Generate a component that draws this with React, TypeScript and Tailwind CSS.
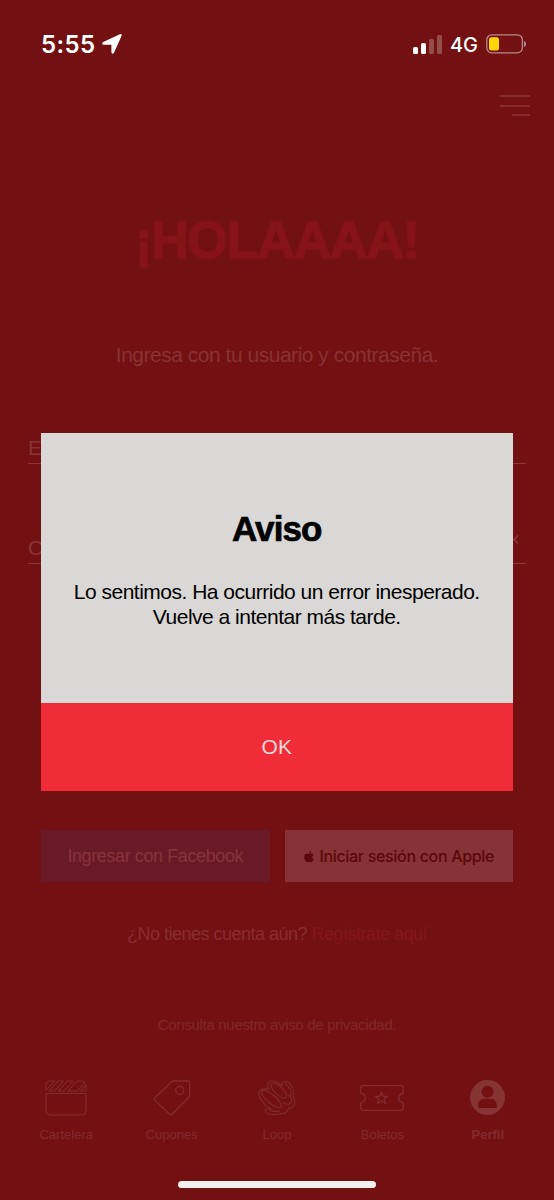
import type { ReactNode } from 'react';
import { FaApple } from 'react-icons/fa';
import clsx from 'clsx';

interface Tab {
  label: string;
  icon: ReactNode;
  active?: boolean;
}

function ClapperIcon() {
  return (
    <svg width="42" height="36" viewBox="0 0 42 36" fill="none" stroke="currentColor" strokeWidth="1.1" strokeLinejoin="round">
      <path d="M1 10.500V5.500Q1 1 5.500 1H9.500L1 10.500zM4 11 13 1h5.500l-9 10zM13.500 11l9-10H28l-9 10zM23 11l9-10h4.500q2.200 0 3.300 1.800L32.500 11h-4zM35.500 11 41 5v6z" />
      <path d="M1 13.500h40V30q0 5-5 5H6q-5 0-5-5z" />
    </svg>
  );
}

function TagIcon() {
  return (
    <svg width="38" height="36" viewBox="0 0 38 36" fill="none" stroke="currentColor" strokeWidth="1.4" strokeLinejoin="round">
      <path d="M19.500 1H35.500q1.200 0 1.200 1.200V16.500L19 34.300q-1.200 1.200-2.400 0L1.800 20.300q-1.200-1.200 0-2.400z" />
      <circle cx="26.800" cy="10.500" r="4" />
    </svg>
  );
}

function LoopIcon() {
  return (
    <svg width="38" height="36" viewBox="0 0 38 36" fill="none" stroke="currentColor" strokeWidth="1.1" strokeLinejoin="round" strokeLinecap="round">
      <path d="M11 9.200C7.500 3.500 11 .2 16 1.400c3.300.8 6 2.400 8.500 4.300C23 1.800 27.500-.3 31 3.200c4 4 5.500 9.500 4 13.500 2 3 2 7 .5 9.300-1.100 1.600-3 2.200-5 2-1.200 4.500-4.500 6.300-8.200 5.500-3 1.600-9.500 1.200-13 0-3.300-1.300-2.800-5 .7-4.800l3 .3C6 25.500 1 18.500.8 13.800.7 9.300 5.500 7.700 11 9.200z" />
      <ellipse cx="13.500" cy="19" rx="12.500" ry="4.300" transform="rotate(41 13.500 19)" />
      <ellipse cx="20.800" cy="10.600" rx="10" ry="4" transform="rotate(42 20.800 10.600)" />
      <path d="M27 3.800c4 2.200 6.800 7 6 11.400-.4 1.300-1.800 1.300-2.500.3" />
      <path d="M12 30.500c4 1 7.500 1 10 .5M25 22.500c3.500 2.700 8 2.300 8.500-1.500.2-1.500-.3-2.600-1.200-3.600" />
    </svg>
  );
}

function TicketIcon() {
  return (
    <svg width="44" height="26" viewBox="0 0 44 26" fill="none" stroke="currentColor" strokeWidth="1.3" strokeLinejoin="round">
      <path d="M3 .7h38q2.300 0 2.300 2.300v5c-3 .8-4.500 2.600-4.500 5s1.500 4.200 4.500 5v5q0 2.300-2.300 2.300H3Q.7 25.300.7 23v-5c3-.8 4.500-2.600 4.500-5S3.700 8.800.7 8V3Q.7.7 3 .7z" />
      <path d="m21.500 7.200 1.600 4.100 4.400.2-3.400 2.800 1.200 4.200-3.800-2.400-3.800 2.400 1.200-4.200-3.400-2.800 4.400-.2z" />
    </svg>
  );
}

function ProfileIcon() {
  return (
    <svg width="35" height="35" viewBox="0 0 35 35">
      <circle cx="17.500" cy="17.500" r="17.500" fill="currentColor" />
      <circle cx="17.500" cy="11.800" r="6" fill="#721012" />
      <path d="M8.200 27v-1.500c0-4 2.600-6.800 6.300-6.800h6c3.700 0 6.300 2.800 6.300 6.800V27q0 1-1 1H9.200q-1 0-1-1z" fill="#721012" />
    </svg>
  );
}

const tabs: Tab[] = [
  { label: 'Cartelera', icon: <ClapperIcon /> },
  { label: 'Cupones', icon: <TagIcon /> },
  { label: 'Loop', icon: <LoopIcon /> },
  { label: 'Boletos', icon: <TicketIcon /> },
  { label: 'Perfil', icon: <ProfileIcon />, active: true },
];

function StatusBar() {
  return (
    <div className="flex h-[88px] items-center justify-between pl-[41px] pr-[28px] font-['Inter',sans-serif] text-white">
      <div className="flex items-center gap-[6px]">
        <span className="pt-[2px] text-[24px] leading-none font-semibold tracking-[0.4px]">5:55</span>
        <svg width="20" height="20" viewBox="0 0 20 20" fill="currentColor">
          <path d="M1.200 8 17.800.3c1.300-.6 2.300.4 1.700 1.700L12 18.800c-.6 1.400-2.600 1-2.600-.6v-7.500H1.700C0 10.700-.3 8.700 1.200 8z" />
        </svg>
      </div>
      <div className="flex items-center">
        <div className="flex h-[19px] items-end gap-[2.500px]">
          <span className="h-[7px] w-[5.500px] rounded-[1.500px] bg-white" />
          <span className="h-[11px] w-[5.500px] rounded-[1.500px] bg-white" />
          <span className="h-[15px] w-[5.500px] rounded-[1.500px] bg-white/25" />
          <span className="h-[19px] w-[5.500px] rounded-[1.500px] bg-white/25" />
        </div>
        <span className="ml-[8px] w-[36px] pt-[2px] text-[20px] leading-none font-medium tracking-[-0.2px]">4G</span>
        <svg width="40" height="20" viewBox="0 0 40 20" fill="none">
          <rect x=".8" y=".8" width="35.600" height="18" rx="5" stroke="#fff" strokeOpacity=".5" strokeWidth="1.300" />
          <rect x="3" y="3.200" width="10" height="13.200" rx="2.500" fill="#ffd60a" />
          <path d="M38 7c2.700 1 2.700 5 0 6z" fill="#fff" fillOpacity=".5" />
        </svg>
      </div>
    </div>
  );
}

function Field({ label, children }: { label: string; children?: ReactNode }) {
  return (
    <div className="mx-[28px] flex h-[32px] items-start justify-between border-b border-[#8a3538] text-[21px] leading-[32px] text-[#893436]">
      <span>{label}</span>
      {children}
    </div>
  );
}

function LoginScreen() {
  return (
    <div className="flex h-full flex-col">
      <StatusBar />
      <div className="flex h-[40px] flex-col items-end gap-[7.500px] pt-[7px] pr-[24px]">
        <span className="h-[2px] w-[30px] bg-[#842b2e]" />
        <span className="h-[2px] w-[30px] bg-[#842b2e]" />
        <span className="h-[2px] w-[18px] bg-[#842b2e]" />
      </div>

      <h1 className="mt-[81px] text-center text-[52px] leading-[62px] font-bold tracking-[-1.2px] text-[#861317] [-webkit-text-stroke:1.5px_#861317]">
        ¡HOLAAAA!
      </h1>
      <p className="mt-[68px] text-center text-[21px] leading-[32px] tracking-[-0.48px] text-[#883235]">
        Ingresa con tu usuario y contraseña.
      </p>

      <div className="mt-[61px] flex flex-col gap-[68px]">
        <Field label="Email" />
        <Field label="Contraseña">
          <svg className="mr-[6px]" width="30" height="24" viewBox="0 0 30 24" fill="none" stroke="currentColor" strokeWidth="1.500">
            <path d="M2 5c6 8 20 8 26-2M24 7l4 5" />
          </svg>
        </Field>
      </div>

      {/* Social sign-in */}
      <div className="mt-[266px] flex h-[52px] gap-[15px] pr-[41px] pl-[41px] text-[18px]">
        <div className="flex flex-1 items-center justify-center bg-[#691a27] text-[#85343a] tracking-[-0.4px]">
          Ingresar con Facebook
        </div>
        <div className="flex flex-1 items-center justify-center gap-[4px] bg-[#873236] font-['Inter',sans-serif] text-[16px] font-medium tracking-[-0.32px] text-[#5c070a]">
          <FaApple className="h-[13px] w-[12px]" />
          <span>Iniciar sesión con Apple</span>
        </div>
      </div>

      <p className="mt-[38px] text-center text-[18px] leading-[28px] tracking-[-0.5px] text-[#872d30]">
        ¿No tienes cuenta aún? <span className="text-[#87151a]">Regístrate aquí</span>
      </p>
      <p className="mt-[67px] text-center text-[15px] leading-[20px] tracking-[-0.32px] text-[#80282b]">
        Consulta nuestro aviso de privacidad.
      </p>

      <nav className="mt-auto flex h-[150px] px-[13.500px] pt-[28px]">
        {tabs.map((tab) => (
          <div key={tab.label} className="flex flex-1 flex-col items-center text-[#812b2e]">
            <div className={clsx('flex h-[39px] items-center', tab.active && 'text-[#863336]')}>{tab.icon}</div>
            <span className={clsx('mt-[8px] text-[13px] leading-[19px]', tab.active && 'font-bold')}>{tab.label}</span>
          </div>
        ))}
      </nav>
    </div>
  );
}

function AlertDialog() {
  return (
    <div role="alertdialog" className="absolute top-[432.500px] left-[41px] flex h-[358.500px] w-[471.500px] flex-col text-center">
      <div className="h-[270px] bg-[#d9d8d6] pt-[75px] text-black">
        <h2 className="text-[35px] leading-[42px] font-bold tracking-[-0.9px] [-webkit-text-stroke:0.7px_#000]">Aviso</h2>
        <p className="mt-[29.500px] text-[21px] leading-[25px] tracking-[-0.5px]">
          Lo sentimos. Ha ocurrido un error inesperado.
          <br />
          Vuelve a intentar más tarde.
        </p>
      </div>
      <button className="flex-1 bg-[#ef2c37] text-[21px] text-[#f8d8d8]">OK</button>
    </div>
  );
}

export default function App() {
  return (
    <div className="relative h-[1200px] w-[554px] overflow-hidden bg-[#721012] font-['Liberation_Sans',Arial,sans-serif]">
      <LoginScreen />
      <AlertDialog />
      {/* Home indicator */}
      <div className="absolute bottom-[12px] left-[178px] h-[7.500px] w-[198px] rounded-full bg-[#f4f0f0]" />
    </div>
  );
}
